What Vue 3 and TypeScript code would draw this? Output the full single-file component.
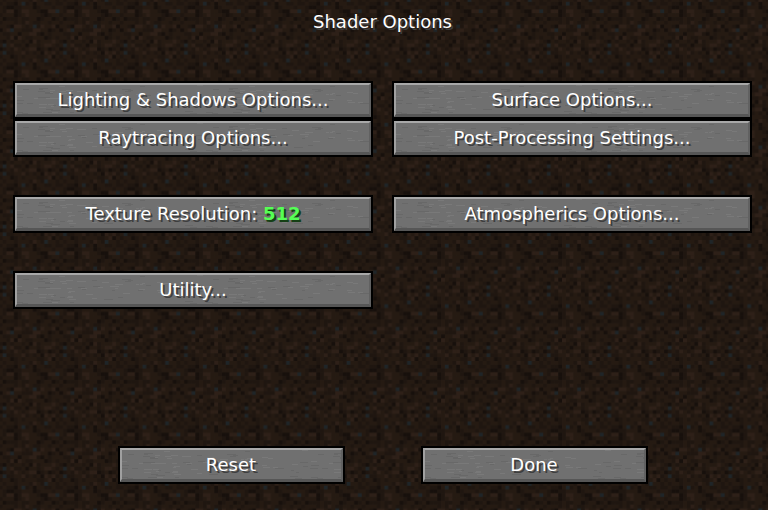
<script setup lang="ts">
interface Option { label: string; value?: string; row: number; col: number }

const options: Option[] = [
  { label: 'Lighting & Shadows Options...', row: 1, col: 1 },
  { label: 'Surface Options...', row: 1, col: 2 },
  { label: 'Raytracing Options...', row: 2, col: 1 },
  { label: 'Post-Processing Settings...', row: 2, col: 2 },
  { label: 'Texture Resolution:', value: '512', row: 4, col: 1 },
  { label: 'Atmospherics Options...', row: 4, col: 2 },
  { label: 'Utility...', row: 6, col: 1 },
]

// One dirt tile, 16 x 16 texels. Each digit is an index into the palette.
const palette = ['#17100c', '#1f1610', '#251a12', '#2e2018', '#1f2528']
const tile = [
  '2122122213214221',
  '1211024120221121',
  '2100112220122212',
  '2133013322100334',
  '1222012322210122',
  '2011121122012201',
  '1222121321122122',
  '2210332124132230',
  '0234221113322012',
  '2112202233102122',
  '2213032112220121',
  '1021221203122232',
  '2423112022123321',
  '0121321233012012',
  '2411223121203231',
  '1220121222112302',
]
const texels = tile.flatMap((line, y) => [...line].map((c, x) => ({ x, y, fill: palette[Number(c)] })))

// Faint grain of the stone buttons, scattered by a fixed seed.
let seed = 41
const next = (max: number) => {
  seed = (seed * 16807) % 2147483647
  return seed % max
}
const grain = Array.from({ length: 120 }, (_, i) => ({
  x: next(184),
  y: next(38),
  w: 3 + next(7),
  fill: i % 2 ? '#797979' : '#686868',
}))
</script>

<template>
  <main class="screen">
    <svg class="dirt" aria-hidden="true">
      <defs>
        <pattern id="dirt" width="16" height="16" patternUnits="userSpaceOnUse" patternTransform="scale(3.78) translate(-0.3 -0.5)">
          <rect v-for="t in texels" :key="t.x + '-' + t.y" :x="t.x" :y="t.y" width="1.05" height="1.05" :fill="t.fill" />
        </pattern>
        <pattern id="stone" width="190" height="38" patternUnits="userSpaceOnUse">
          <rect width="190" height="38" fill="#707070" />
          <rect v-for="(g, i) in grain" :key="i" :x="g.x" :y="g.y" :width="g.w" height="1" :fill="g.fill" />
        </pattern>
      </defs>
      <rect width="100%" height="100%" fill="url(#dirt)" />
    </svg>
    <h1 class="title">Shader Options</h1>
    <div class="options">
      <button v-for="o in options" :key="o.label" type="button" class="button" :class="['row-' + o.row, 'col-' + o.col]">
        <svg class="stone" aria-hidden="true"><rect width="100%" height="100%" fill="url(#stone)" /></svg>
        <span class="label">{{ o.label }}<template v-if="o.value">&nbsp;<span class="value">{{ o.value }}</span></template></span>
      </button>
    </div>
    <footer class="actions">
      <button v-for="a in ['Reset', 'Done']" :key="a" type="button" class="button">
        <svg class="stone" aria-hidden="true"><rect width="100%" height="100%" fill="url(#stone)" /></svg>
        <span class="label">{{ a }}</span>
      </button>
    </footer>
  </main>
</template>

<style>
body { margin: 0; background: #1f1710; }
</style>

<style scoped>
.screen {
  position: relative;
  isolation: isolate;
  box-sizing: border-box;
  min-height: 100vh;
  padding: 10px 16px 26px 13px;
  display: flex;
  flex-direction: column;
  color: #fff;
  font-family: "DejaVu Sans", sans-serif;
  font-size: 18px;
  line-height: 24px;
}
.dirt, .stone {
  position: absolute;
  inset: 0;
  z-index: -1;
  width: 100%;
  height: 100%;
}
.title {
  margin: 0 0 47px;
  font: inherit;
  text-align: center;
  text-shadow: 2px 2px #3e3e3e;
}
.options {
  display: grid;
  grid-template-columns: 1fr 1fr;
  grid-template-rows: repeat(6, 38px);
  column-gap: 19px;
}
.row-1 { grid-row: 1; }
.row-2 { grid-row: 2; }
.row-4 { grid-row: 4; }
.row-6 { grid-row: 6; }
.col-1 { grid-column: 1; }
.col-2 { grid-column: 2; }
.button {
  position: relative;
  isolation: isolate;
  box-sizing: border-box;
  height: 38px;
  padding: 0;
  border: 2px solid #000;
  background: #707070;
  color: inherit;
  font: inherit;
  cursor: pointer;
}
.button::after {
  content: "";
  position: absolute;
  inset: 0;
  border: solid;
  border-width: 2px 2px 3px;
  border-color: #a8a8a8 #616161 #565656 #a0a0a0;
}
.label { text-shadow: 2px 2px #3e3e3e; }
.value { color: #55ff55; font-weight: bold; text-shadow: 2px 2px #153f15; }
.actions {
  display: grid;
  grid-template-columns: repeat(2, 227px);
  justify-content: center;
  column-gap: 76px;
  margin-top: auto;
}
</style>
